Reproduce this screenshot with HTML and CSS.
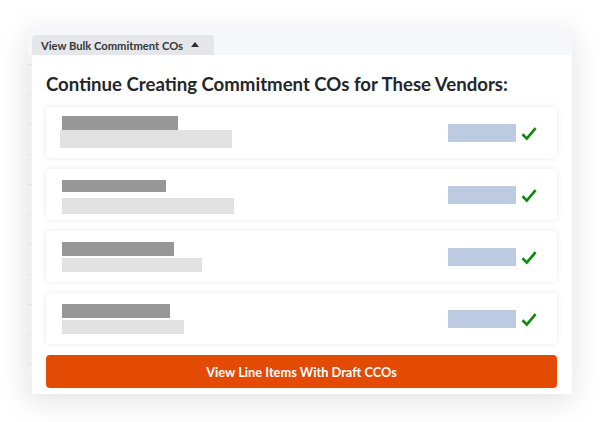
FILE: index.html
```html
<!DOCTYPE html>
<html>
<head>
<meta charset="utf-8">
<link rel="stylesheet" href="styles.css">
</head>
<body>
<div class="window">
  <div class="topbar">
    <div class="tab">
      <span class="tab-label">View Bulk Commitment COs</span>
      <span class="caret"></span>
    </div>
  </div>
  <div class="main">
    <div class="strip"></div>
    <div class="panel">
      <h1 class="title">Continue Creating Commitment COs for These Vendors:</h1>
      <div class="list">
        <div class="card">
          <div class="info first">
            <div class="bar dark" style="width:116px"></div>
            <div class="bar light" style="width:172px"></div>
          </div>
          <div class="status">
            <div class="pill"></div>
            <svg class="check" viewBox="0 0 16 15" width="16" height="15"><path d="M1.5 8.2 L5.8 12.6 L14.6 2.2" fill="none" stroke="#0f8a0f" stroke-width="2.7" stroke-linecap="butt" stroke-linejoin="miter"/></svg>
          </div>
        </div>
        <div class="card">
          <div class="info second">
            <div class="bar dark" style="width:104px"></div>
            <div class="bar light" style="width:172px"></div>
          </div>
          <div class="status">
            <div class="pill"></div>
            <svg class="check" viewBox="0 0 16 15" width="16" height="15"><path d="M1.5 8.2 L5.8 12.6 L14.6 2.2" fill="none" stroke="#0f8a0f" stroke-width="2.7" stroke-linecap="butt" stroke-linejoin="miter"/></svg>
          </div>
        </div>
        <div class="card">
          <div class="info">
            <div class="bar dark" style="width:112px"></div>
            <div class="bar light" style="width:140px"></div>
          </div>
          <div class="status">
            <div class="pill"></div>
            <svg class="check" viewBox="0 0 16 15" width="16" height="15"><path d="M1.5 8.2 L5.8 12.6 L14.6 2.2" fill="none" stroke="#0f8a0f" stroke-width="2.7" stroke-linecap="butt" stroke-linejoin="miter"/></svg>
          </div>
        </div>
        <div class="card">
          <div class="info">
            <div class="bar dark" style="width:108px"></div>
            <div class="bar light" style="width:122px"></div>
          </div>
          <div class="status">
            <div class="pill"></div>
            <svg class="check" viewBox="0 0 16 15" width="16" height="15"><path d="M1.5 8.2 L5.8 12.6 L14.6 2.2" fill="none" stroke="#0f8a0f" stroke-width="2.7" stroke-linecap="butt" stroke-linejoin="miter"/></svg>
          </div>
        </div>
      </div>
      <button class="primary">View Line Items With Draft CCOs</button>
    </div>
  </div>
</div>
</body>
</html>
```
FILE: styles.css
```css
html, body {
  margin: 0;
  padding: 0;
  background: #ffffff;
}
body {
  width: 600px;
  height: 422px;
  overflow: hidden;
  font-family: Lato, "Open Sans", sans-serif;
}
.window {
  margin: 28px 0 0 28px;
  width: 544px;
  height: 366px;
  display: flex;
  flex-direction: column;
  box-shadow: 0 6px 28px rgba(0, 0, 0, 0.13);
  background: #f5f7fa;
}
.topbar {
  height: 27px;
  box-sizing: border-box;
  padding: 7px 0 0 4px;
  background: #f5f7fa;
  display: flex;
}
.tab {
  width: 182px;
  height: 20px;
  box-sizing: border-box;
  background: #e4e6e9;
  border-radius: 4px 4px 0 0;
  display: flex;
  align-items: center;
  padding-left: 9px;
  gap: 8px;
}
.tab-label {
  font-size: 11.2px;
  font-weight: 700;
  color: #343638;
}
.caret {
  width: 0;
  height: 0;
  border-left: 4.5px solid transparent;
  border-right: 4.5px solid transparent;
  border-bottom: 5px solid #2c2e30;
  margin-top: -1px;
}
.main {
  flex: 1;
  display: flex;
}
.strip {
  width: 4px;
  background-color: #f1f1f2;
  background-image: repeating-linear-gradient(to bottom, transparent 0, transparent 9px, #e6e6e7 9px, #e6e6e7 10px, transparent 10px, transparent 30px);
}
.panel {
  flex: 1;
  background: #ffffff;
  padding: 17px 15px 5px 14px;
  display: flex;
  flex-direction: column;
}
.title {
  margin: 0;
  font-size: 18.6px;
  line-height: 24px;
  font-weight: 700;
  color: #232629;
}
.list {
  margin-top: 11px;
  display: flex;
  flex-direction: column;
  gap: 11px;
}
.card {
  height: 51px;
  border-radius: 4px;
  background: #ffffff;
  box-shadow: 0 0 6px rgba(0, 0, 0, 0.085);
  display: flex;
  justify-content: space-between;
  align-items: center;
  padding: 0 20px 0 16px;
}
.info {
  align-self: flex-start;
  padding-top: 11px;
  display: flex;
  flex-direction: column;
  gap: 2px;
}
.bar {
  height: 14px;
}
.bar.dark {
  background: #979797;
}
.bar.light {
  background: #e1e1e1;
}
.info.first {
  padding-top: 9px;
  gap: 0;
}
.info.first .light {
  height: 18px;
  margin-left: -2px;
}
.info.second {
  gap: 6px;
}
.info.second .dark {
  height: 12px;
}
.info.second .light {
  height: 16px;
}
.status {
  display: flex;
  align-items: center;
  gap: 5px;
  margin-top: 1px;
}
.pill {
  width: 68px;
  height: 18px;
  background: #bccae2;
}
.check {
  display: block;
}
.primary {
  margin-top: 11px;
  height: 33px;
  border: none;
  border-radius: 4px;
  background: #e34a03;
  color: #ffffff;
  font-family: Lato, "Open Sans", sans-serif;
  font-size: 12.8px;
  font-weight: 700;
  padding: 0;
}
```
